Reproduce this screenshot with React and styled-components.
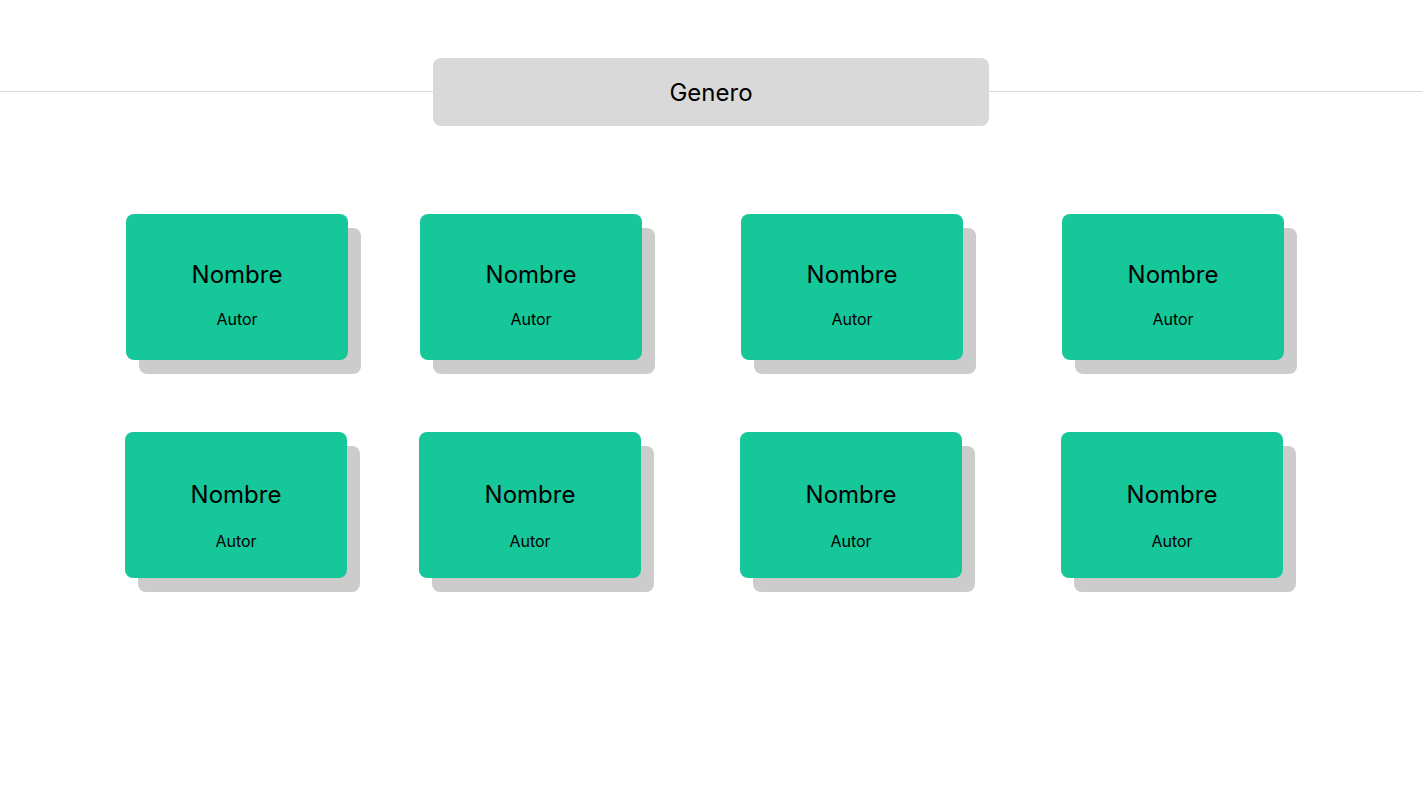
import styled, { createGlobalStyle } from "styled-components";

const GlobalStyle = createGlobalStyle`
  body {
    margin: 0;
    background: #fff;
    font-family: Inter, "Noto Sans", sans-serif;
    color: #000;
  }
`;

const rows = [
  { offset: 126, top: 46, gap: 21 },
  { offset: 125, top: 48, gap: 23 },
];

const columns = [0, 1, 2, 3];

const App = () => {
  return (
    <Page>
      <GlobalStyle />
      <Header>
        <Line />
        <Title>Genero</Title>
        <Line />
      </Header>
      <Grid>
        {rows.map((row, r) => (
          <Row key={r} $offset={row.offset}>
            {columns.map((c) => (
              <Card key={c} $top={row.top} $gap={row.gap}>
                <Name>Nombre</Name>
                <Author>Autor</Author>
              </Card>
            ))}
          </Row>
        ))}
      </Grid>
    </Page>
  );
};

const Page = styled.div`
  width: 1422px;
  min-height: 800px;
  padding-top: 58px;
  box-sizing: border-box;
`;

const Header = styled.header`
  display: flex;
  align-items: center;
`;

const Line = styled.div`
  flex: 1;
  height: 1px;
  background: #d9d9d9;
  margin-top: -1px;
`;

const Title = styled.div`
  width: 556px;
  height: 68px;
  border-radius: 8px;
  background: #d9d9d9;
  display: flex;
  align-items: center;
  justify-content: center;
  font-size: 24px;
  font-weight: 400;
`;

const Grid = styled.main`
  display: flex;
  flex-direction: column;
  gap: 72px;
  margin-top: 88px;
`;

const Row = styled.div`
  display: grid;
  grid-template-columns: 294px 321px 321px 222px;
  padding-left: ${(p) => p.$offset}px;
`;

const Card = styled.div`
  width: 222px;
  height: 146px;
  box-sizing: border-box;
  border-radius: 8px;
  background: #16c79a;
  box-shadow: 13px 14px 0 #cccccc;
  display: flex;
  flex-direction: column;
  align-items: center;
  padding-top: ${(p) => p.$top}px;
  gap: ${(p) => p.$gap}px;
`;

const Name = styled.div`
  font-size: 24px;
  line-height: 29px;
`;

const Author = styled.div`
  font-size: 16px;
  line-height: 19px;
`;

export default App;
